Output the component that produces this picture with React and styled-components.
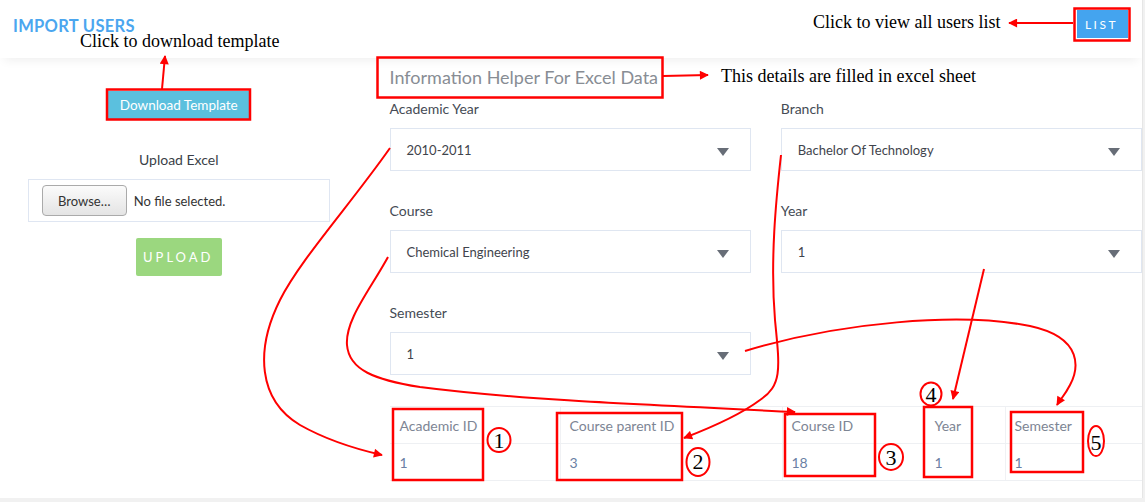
import React from 'react';
import styled, { createGlobalStyle } from 'styled-components';

const GlobalStyle = createGlobalStyle`
  body {
    margin: 0;
    background: #f1f1f1;
    font-family: 'Lato', 'Open Sans', sans-serif;
  }
  * { box-sizing: border-box; }
`;

const Panel = styled.div`
  position: relative;
  width: 1143px;
  height: 498px;
  background: #fff;
  border-right: 1px solid #e6e6e6;
  overflow: hidden;
`;

const Header = styled.header`
  height: 58px;
  display: flex;
  align-items: center;
  justify-content: space-between;
  padding: 0 14px 10px 13px;
  box-shadow: 0 6px 10px -4px rgba(0, 0, 0, 0.07);
`;

const PageTitle = styled.h1`
  margin: 4px 0 0;
  font-size: 16.5px;
  font-weight: 700;
  color: #4ba6ef;
  letter-spacing: 0.3px;
`;

const Btn = styled.button`
  border: 0;
  color: #fff;
  font-family: inherit;
  cursor: pointer;
`;

const ListBtn = styled(Btn)`
  width: 51px;
  height: 28px;
  background: #44a4ef;
  font-size: 12px;
  letter-spacing: 2.5px;
  padding-left: 4px;
`;

const Body = styled.div`
  display: flex;
`;

const LeftCol = styled.div`
  width: 358px;
  padding-top: 33px;
  display: flex;
  flex-direction: column;
  align-items: center;
`;

const DownloadBtn = styled(Btn)`
  width: 141px;
  height: 28px;
  background: #5bc0de;
  font-size: 13.5px;
  box-shadow: 0 1px 1px rgba(0, 0, 0, 0.12);
`;

const UploadLabel = styled.div`
  margin-top: 32px;
  font-size: 14px;
  line-height: 18px;
  color: #3a3f48;
`;

const FileBox = styled.div`
  margin-top: 10px;
  width: 302px;
  height: 43px;
  border: 1px solid #dfe6f2;
  display: flex;
  align-items: center;
  padding-left: 13px;
  gap: 7px;
  font-size: 13px;
  color: #333;
`;

const BrowseBtn = styled.div`
  width: 85px;
  height: 31px;
  border: 1px solid #aaa;
  border-radius: 4px;
  background: linear-gradient(#fbfbfb, #e4e4e4);
  display: flex;
  align-items: center;
  justify-content: center;
  font-size: 13px;
  color: #333;
`;

const UploadBtn = styled(Btn)`
  margin-top: 16px;
  width: 86px;
  height: 38px;
  border-radius: 2px;
  background: #9bd77f;
  font-size: 13px;
  letter-spacing: 3px;
  padding-left: 5px;
`;

const RightCol = styled.div`
  flex: 1;
  padding: 10px 0 0 32px;
`;

const Heading = styled.h2`
  margin: 0 0 14px;
  font-size: 18px;
  line-height: 18px;
  font-weight: 400;
  color: #888d94;
`;

const FormGrid = styled.div`
  display: grid;
  grid-template-columns: 1fr 1fr;
  column-gap: 30px;
  row-gap: 31px;
`;

const Field = styled.div``;

const Label = styled.div`
  font-size: 14px;
  line-height: 18px;
  color: #454b55;
  margin-bottom: 10px;
`;

const SelectBox = styled.div`
  height: 43px;
  border: 1px solid #dfe6f1;
  display: flex;
  align-items: center;
  justify-content: space-between;
  padding: 0 21px 0 16px;
  font-size: 13px;
  color: #3f444c;
`;

const Caret = styled.span`
  margin-top: 5px;
  width: 0;
  height: 0;
  border-left: 6px solid transparent;
  border-right: 6px solid transparent;
  border-top: 8px solid #676d77;
`;

const Table = styled.table`
  margin-top: 31px;
  width: 752px;
  border-collapse: collapse;
  table-layout: fixed;
`;

const Cell = styled.td`
  height: 37px;
  padding: 0 0 0 9px;
  font-size: 14px;
  color: ${(p) => (p.$head ? '#7d8594' : '#6b7fa4')};
  border-top: 1px solid #eef0f3;
  border-bottom: 1px solid #eef0f3;
  border-left: 1px solid ${(p) => (p.$line ? '#f0f1f4' : 'transparent')};
`;

const Overlay = styled.svg`
  position: absolute;
  left: 0;
  top: 0;
  pointer-events: none;
`;

const Note = styled.div`
  position: absolute;
  font-family: 'Liberation Serif', serif;
  font-size: 18px;
  line-height: 18px;
  color: #000;
  white-space: nowrap;
`;

const selects = [
  { label: 'Academic Year', value: '2010-2011' },
  { label: 'Branch', value: 'Bachelor Of Technology' },
  { label: 'Course', value: 'Chemical Engineering' },
  { label: 'Year', value: '1' },
  { label: 'Semester', value: '1' },
];

const columns = [
  { head: 'Academic ID', value: '1', width: 170 },
  { head: 'Course parent ID', value: '3', width: 222, line: true },
  { head: 'Course ID', value: '18', width: 143, line: true },
  { head: 'Year', value: '1', width: 80 },
  { head: 'Semester', value: '1', width: 137, line: true },
];

const circles = [
  { n: '1', cx: 499, cy: 440, rx: 11.5, ry: 12, by: 448 },
  { n: '2', cx: 698, cy: 462, rx: 11.5, ry: 14, by: 469 },
  { n: '3', cx: 891, cy: 457, rx: 12, ry: 13, by: 465 },
  { n: '4', cx: 931, cy: 394, rx: 10.5, ry: 11.5, by: 402 },
  { n: '5', cx: 1096, cy: 441, rx: 8, ry: 15, by: 450 },
];

function Annotations() {
  return (
    <Overlay width="1145" height="502" viewBox="0 0 1145 502">
      <defs>
        <marker id="ah" viewBox="0 0 10 10" refX="9" refY="5" markerWidth="11" markerHeight="9" markerUnits="userSpaceOnUse" orient="auto">
          <path d="M0,0 L10,5 L0,10 z" fill="#f00" />
        </marker>
      </defs>
      <g fill="none" stroke="#f00" strokeWidth="2.5">
        <rect x="107" y="89.5" width="143" height="30" />
        <rect x="1074.5" y="8.5" width="55" height="32" />
        <rect x="377.5" y="57.5" width="285" height="40" />
        <rect x="393" y="409" width="90" height="71" />
        <rect x="557" y="413" width="125" height="67" />
        <rect x="785" y="414" width="90" height="62" />
        <rect x="924" y="407" width="48" height="70" />
        <rect x="1011" y="412" width="72" height="60" />
      </g>
      <g fill="none" stroke="#f00" strokeWidth="2" markerEnd="url(#ah)">
        <path d="M162,89 L165,56" />
        <path d="M1073,23 L1009,23" />
        <path d="M663,76 L708,75" />
        <path d="M390,148 C350,205 300,260 280,300 C255,350 258,400 300,425 C330,442 360,450 382,455" />
        <path d="M388,257 C370,290 345,320 347,345 C349,370 375,380 420,387 C520,400 650,405 795,412" />
        <path d="M781,155 C776,200 770,260 775,320 C780,370 782,385 760,400 C740,415 710,428 684,438" />
        <path d="M984,269 L953,399" />
        <path d="M745,351 C840,322 960,312 1030,326 C1085,338 1078,370 1070,385 C1065,395 1060,400 1057,405" />
      </g>
      {circles.map((c) => (
        <g key={c.n}>
          <ellipse cx={c.cx} cy={c.cy} rx={c.rx} ry={c.ry} fill="none" stroke="#f00" strokeWidth="2" />
          <text x={c.cx} y={c.by} textAnchor="middle" fontFamily="'Liberation Serif', serif" fontSize="22" fill="#000">
            {c.n}
          </text>
        </g>
      ))}
    </Overlay>
  );
}

export default function App() {
  return (
    <>
      <GlobalStyle />
      <Panel>
        <Header>
          <PageTitle>IMPORT USERS</PageTitle>
          <ListBtn>LIST</ListBtn>
        </Header>
        <Body>
          <LeftCol>
            <DownloadBtn>Download Template</DownloadBtn>
            <UploadLabel>Upload Excel</UploadLabel>
            <FileBox>
              <BrowseBtn>Browse…</BrowseBtn>
              No file selected.
            </FileBox>
            <UploadBtn>UPLOAD</UploadBtn>
          </LeftCol>
          <RightCol>
            <Heading>Information Helper For Excel Data</Heading>
            <FormGrid>
              {selects.map((s) => (
                <Field key={s.label}>
                  <Label>{s.label}</Label>
                  <SelectBox>
                    {s.value}
                    <Caret />
                  </SelectBox>
                </Field>
              ))}
            </FormGrid>
            <Table>
              <colgroup>
                {columns.map((c) => (
                  <col key={c.head} style={{ width: c.width }} />
                ))}
              </colgroup>
              <tbody>
                <tr>
                  {columns.map((c) => (
                    <Cell key={c.head} $head $line={c.line}>{c.head}</Cell>
                  ))}
                </tr>
                <tr>
                  {columns.map((c) => (
                    <Cell key={c.head} $line={c.line}>{c.value}</Cell>
                  ))}
                </tr>
              </tbody>
            </Table>
          </RightCol>
        </Body>
        <Note style={{ left: 80, top: 32 }}>Click to download template</Note>
        <Note style={{ left: 813, top: 13 }}>Click to view all users list</Note>
        <Note style={{ left: 721, top: 67 }}>This details are filled in excel sheet</Note>
        <Annotations />
      </Panel>
    </>
  );
}
